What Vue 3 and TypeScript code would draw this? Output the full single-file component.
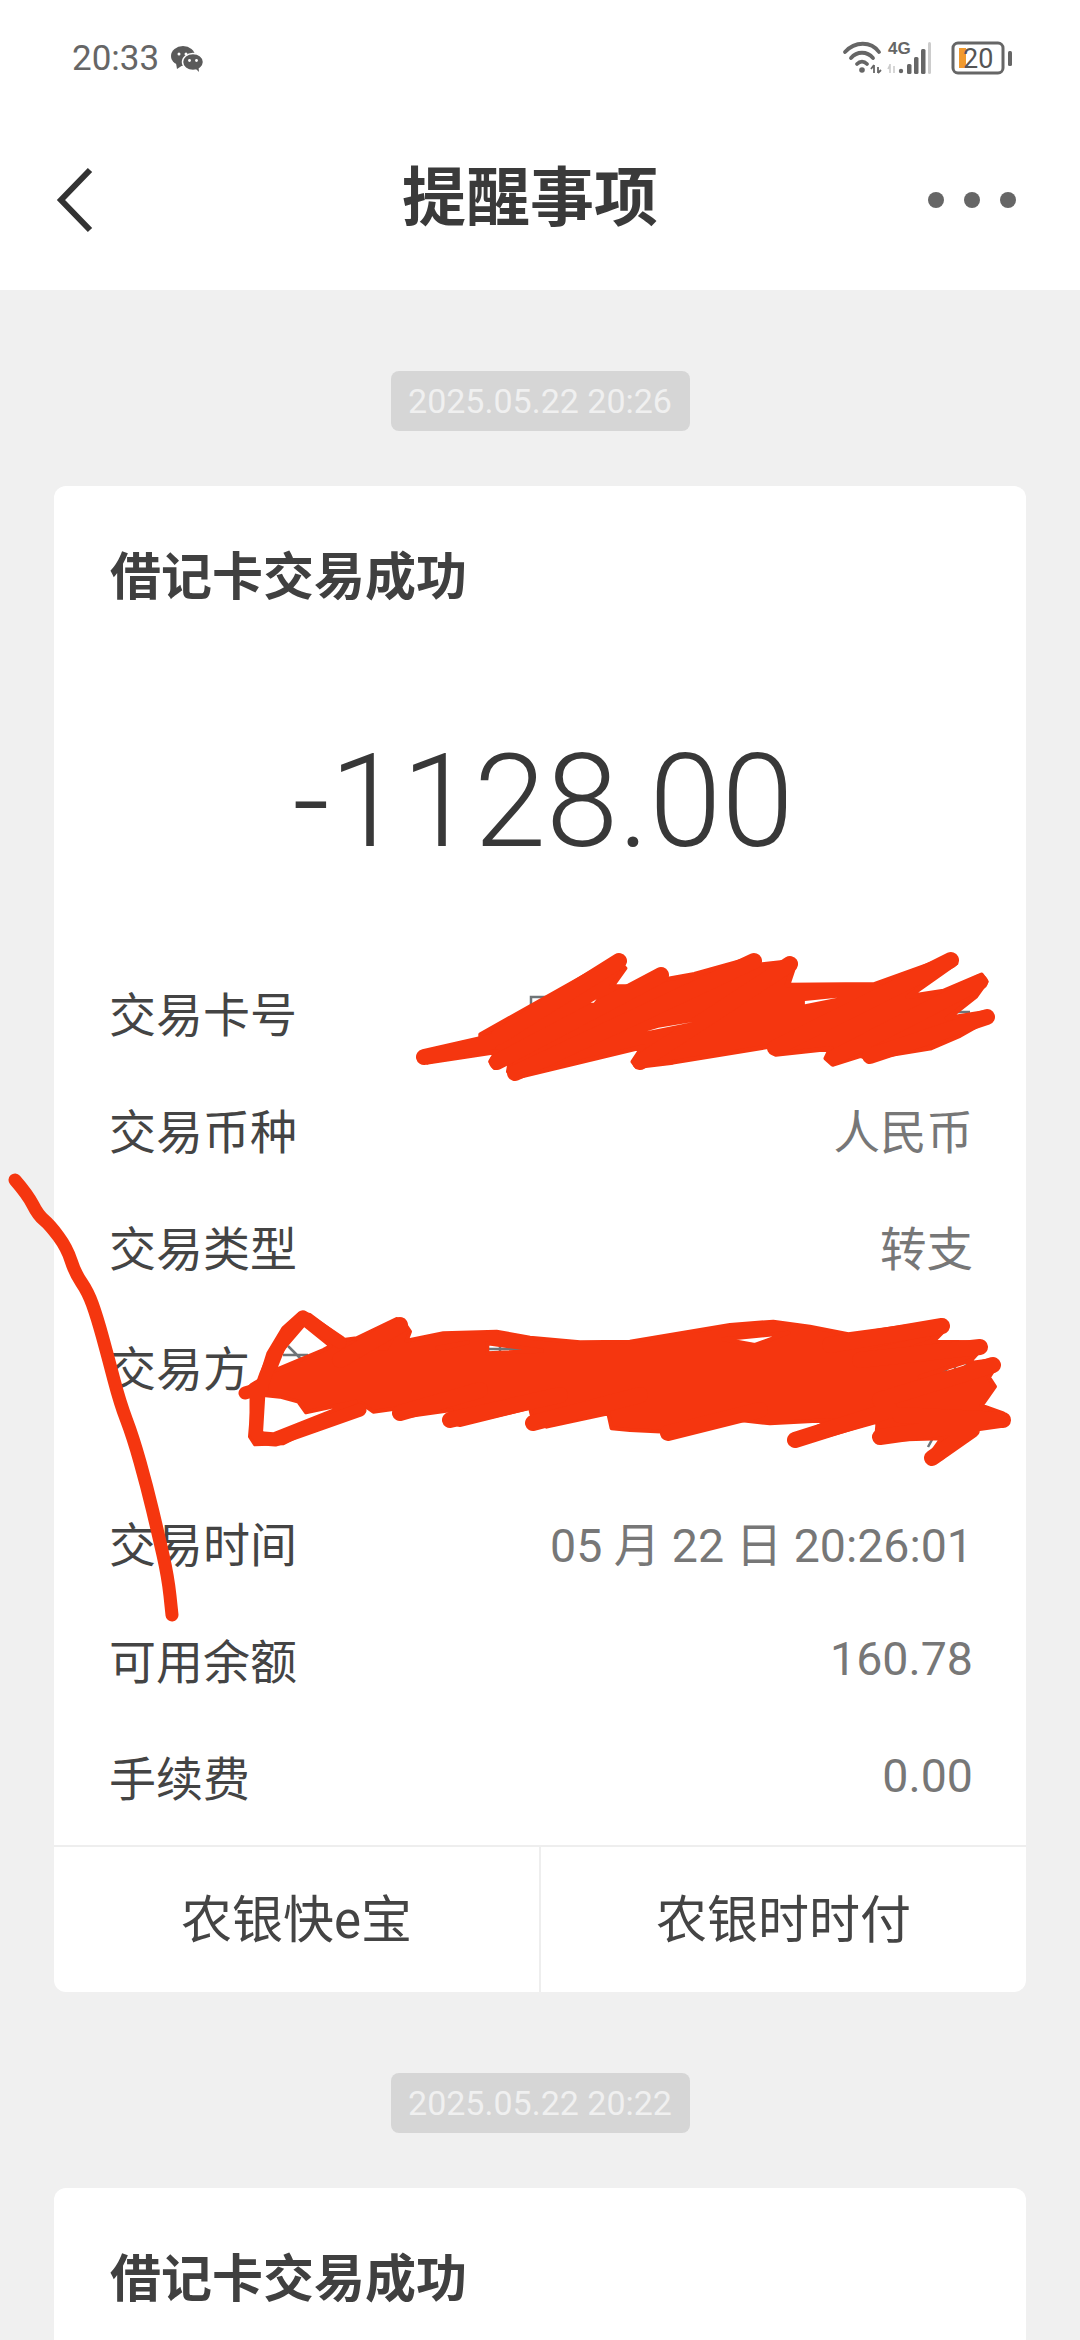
<script setup lang="ts">
interface Row {
  label: string;
  value: string;
  tall?: boolean;
}

interface Notice {
  time: string;
  title: string;
  amount?: string;
  rows?: Row[];
  actions?: string[];
}

const notices: Notice[] = [
  {
    time: '2025.05.22 20:26',
    title: '借记卡交易成功',
    amount: '-1128.00',
    rows: [
      { label: '交易卡号', value: '' },
      { label: '交易币种', value: '人民币' },
      { label: '交易类型', value: '转支' },
      { label: '交易方', value: '', tall: true },
      { label: '交易时间', value: '05 月 22 日 20:26:01' },
      { label: '可用余额', value: '160.78' },
      { label: '手续费', value: '0.00' },
    ],
    actions: ['农银快e宝', '农银时时付'],
  },
  {
    time: '2025.05.22 20:22',
    title: '借记卡交易成功',
  },
];

// pen stroke down the left edge, rounded through the midpoints
const penPoints: [number, number][] = [
  [15, 1180], [28, 1195], [38, 1215], [50, 1225], [67, 1248], [75, 1273], [88, 1292],
  [97, 1317], [108, 1357], [120, 1403], [133, 1437], [147, 1487], [158, 1533], [168, 1577], [172, 1615],
];

const penPath = penPoints.reduce((d, [x, y], i) => {
  if (i === 0) return `M${x} ${y}`;
  const next = penPoints[i + 1];
  if (!next) return `${d} L${x} ${y}`;
  return `${d} Q${x} ${y} ${(x + next[0]) / 2} ${(y + next[1]) / 2}`;
}, '');
</script>

<template>
  <div class="screen">
    <header class="top">
      <div class="status">
        <div class="status-left">
          <span class="clock">20:33</span>
          <svg class="wechat" width="34" height="26" viewBox="0 0 34 26">
            <ellipse cx="13" cy="10" rx="12" ry="10" fill="#5a5a5a" />
            <path d="M6 17l1 6 6-4z" fill="#5a5a5a" />
            <circle cx="9" cy="8" r="1.5" fill="#fff" />
            <circle cx="16" cy="8" r="1.5" fill="#fff" />
            <ellipse cx="23" cy="16" rx="10.5" ry="8.5" fill="#5a5a5a" stroke="#fff" stroke-width="1.5" />
            <path d="M26 23l3 3-.5-5z" fill="#5a5a5a" />
            <circle cx="19.5" cy="14.5" r="1.4" fill="#fff" />
            <circle cx="26.5" cy="14.5" r="1.4" fill="#fff" />
          </svg>
        </div>
        <svg class="status-icons" width="172" height="36" viewBox="0 0 172 36" fill="none">
          <g stroke="#666" stroke-linecap="round">
            <path d="M4 12C14 1 30 1 38 12" stroke-width="3.8" />
            <path d="M10 18C16 11 26 11 32 18" stroke-width="3.8" />
            <path d="M16 24C19 21 23 21 26 24" stroke-width="3.8" />
          </g>
          <circle cx="21" cy="30" r="2.8" fill="#666" />
          <path d="M33 25v8M37 27v6M30 29l3-4M40 30l-3 3" stroke="#666" stroke-width="1.8" />
          <text x="47" y="14" class="net">4G</text>
          <path d="M49 24v9M53 26v7M47 29l2-4" stroke="#ccc" stroke-width="1.6" />
          <g fill="#666">
            <circle cx="60" cy="31" r="2.2" />
            <rect x="66" y="24" width="4.5" height="10" rx="1.5" />
            <rect x="73" y="17" width="4.5" height="17" rx="1.5" />
            <rect x="80" y="9" width="4.5" height="25" rx="1.5" />
          </g>
          <rect x="87" y="2" width="3" height="32" rx="1.5" fill="#ccc" />
          <rect x="112" y="3" width="50" height="30" rx="5" stroke="#666" stroke-width="3" />
          <rect x="118" y="8" width="7" height="20" fill="#f19a2e" />
          <text x="122" y="28" class="level">20</text>
          <rect x="167" y="11" width="4" height="15" rx="1.5" fill="#666" />
        </svg>
      </div>
      <nav class="nav">
        <svg class="back" width="40" height="66" viewBox="0 0 40 66" fill="none">
          <path d="M36 3L7 33l29 30" stroke="#333" stroke-width="6" />
        </svg>
        <h1 class="nav-title">提醒事项</h1>
        <div class="more">
          <i></i>
          <i></i>
          <i></i>
        </div>
      </nav>
    </header>

    <main class="list">
      <section v-for="notice in notices" :key="notice.time" class="notice">
        <div class="stamp">{{ notice.time }}</div>
        <article class="card">
          <h2 class="card-title">{{ notice.title }}</h2>
          <template v-if="notice.rows">
            <div class="amount">{{ notice.amount }}</div>
            <div class="rows">
              <div
                v-for="row in notice.rows"
                :key="row.label"
                class="row"
                :class="{ tall: row.tall }"
              >
                <span class="label">{{ row.label }}</span>
                <span class="value">{{ row.value }}</span>
              </div>
            </div>
            <div class="actions">
              <button v-for="action in notice.actions" :key="action" class="action">{{ action }}</button>
            </div>
          </template>
        </article>
      </section>
    </main>

    <!-- hand drawn redaction marks over the screenshot -->
    <svg class="marks" width="1080" height="2340" viewBox="0 0 1080 2340" fill="none">
      <g stroke="#6f7477" stroke-width="2.5">
        <path d="M531 1008V997H552M914 998H930M950 1020V1012H970" />
        <path d="M283 1355H308M288 1346l14 14M488 1349h50M500 1345v12" />
        <path d="M930 1372l8-8 6 8 8-8 6 8 10-8M966 1362h6M928 1447l6-11" />
      </g>
      <!-- card number scribble -->
      <g transform="translate(400 940) scale(0.3954 0.3333)">
        <path
          fill="#f5360f"
          stroke="#f5360f"
          stroke-width="14"
          stroke-linejoin="round"
          d="M50 358L205 303 205 283 540 60 568 85 535 140 580 140 660 100 675 118 745 103 890 55 905 75 985 65 995 82 980 135 1200 133 1395 50 1405 70 1285 170 1375 153 1470 105 1482 125 1455 170 1385 235 1480 217 1492 235 1415 287 1340 325 1185 355 1165 347 1095 373 1078 355 1090 325 950 343 940 318 690 367 600 380 590 365 615 320 300 410 275 395 280 360 240 383 230 365 245 335 70 367Z"
        />
      </g>
      <path
        class="scrawl"
        d="M424 1057L490 1042M498 1037L619 961M497 1062L661 975M515 1073L754 961M640 1062L790 964M775 1048L951 960M835 1057L980 982M870 1056L987 1017"
      />
      <g transform="translate(400 940) scale(0.3954 0.3333)">
        <path d="M1024 183L1106 173 1024 193ZM624 274L741 246 654 263ZM482 188L497 178 490 188Z" fill="#fff" />
      </g>
      <!-- counterparty scribble -->
      <g transform="translate(230 1290) scale(0.3333)">
        <path
          fill="#f5360f"
          fill-rule="evenodd"
          stroke="#f5360f"
          stroke-width="12"
          stroke-linejoin="round"
          d="M40 310L65 285 90 270 115 190 160 115 210 70 240 75 340 150 380 145 500 87 520 95 540 125 530 152 640 130 800 125 900 143 1050 157 1200 155 1500 105 1630 95 1740 110 1855 133 2135 95 2152 112 2110 155 2245 157 2256 175 2215 220 2290 210 2300 225 2277 262 2295 290 2255 347 2320 370 2326 395 2310 407 2230 405 2225 432 2135 505 2105 515 2100 495 2135 445 1955 450 1940 430 1943 395 1710 460 1690 445 1805 390 1620 400 1530 390 1330 440 1308 425 1200 420 1145 415 1135 370 950 410 910 395 900 353 690 405 655 395 665 360 520 380 505 355 430 365 395 340 160 460 75 463 60 440 70 320Z
          M100 315L150 320 205 335 228 367 378 335 130 433 93 430Z
          M222 103L302 168 280 180 133 242 160 175Z
          M622 173L714 157 636 176Z
          M772 160L936 182 772 190Z
          M450 175L484 150 470 175Z
          M1480 148L1676 128 1575 165Z
          M1920 183L2096 143 2004 175Z
          M2070 260L2226 210 2205 240 2075 261Z"
        />
      </g>
      <path
        class="scrawl"
        d="M830 1345L942 1326M860 1360L980 1347M880 1400L993 1365M900 1415L1003 1420M932 1458L972 1430M795 1440L890 1410M880 1437L1000 1420M668 1433L760 1410M533 1423L640 1395M450 1420L560 1395M400 1413L480 1390M400 1325L340 1360"
      />
      <path
        d="M340 1342L303 1317Q275 1345 262 1385M245 1393L262 1388M256 1400L256 1432Q258 1440 275 1440L360 1410"
        stroke="#f5360f"
        stroke-width="13"
        stroke-linecap="round"
        stroke-linejoin="round"
      />
      <path :d="penPath" stroke="#f5360f" stroke-width="13" stroke-linecap="round" stroke-linejoin="round" />
    </svg>
  </div>
</template>

<style>
html,
body {
  margin: 0;
  background: #f0f0f0;
}
</style>

<style scoped>
.screen {
  position: relative;
  width: 1080px;
  height: 2340px;
  overflow: hidden;
  background: #f0f0f0;
  font-family: Roboto, "Noto Sans CJK SC", sans-serif;
}

.top {
  height: 290px;
  background: #fff;
}

.status {
  height: 110px;
  padding: 6px 67px 0 72px;
  display: flex;
  align-items: center;
  justify-content: space-between;
  box-sizing: border-box;
}

.status-left {
  display: flex;
  align-items: center;
  gap: 11px;
}

.clock {
  font-size: 35px;
  color: #666;
}

.wechat {
  margin-top: 2px;
}

.net {
  font-family: "Liberation Sans", sans-serif;
  font-size: 17px;
  font-weight: 700;
  fill: #666;
}

.level {
  font-size: 27px;
  fill: #555;
}

.nav {
  height: 180px;
  padding: 0 64px 0 54px;
  display: flex;
  align-items: center;
  justify-content: space-between;
  position: relative;
}

.nav-title {
  position: absolute;
  left: 0;
  right: 20px;
  top: 52px;
  margin: 0;
  text-align: center;
  font-size: 64px;
  line-height: 74px;
  font-weight: 700;
  color: #3a3a3a;
}

.more {
  display: flex;
  gap: 20px;
}

.more i {
  width: 16px;
  height: 16px;
  border-radius: 50%;
  background: #666;
}

.list {
  display: flex;
  flex-direction: column;
}

.notice {
  display: flex;
  flex-direction: column;
  align-items: center;
}

.stamp {
  width: 299px;
  height: 60px;
  margin-top: 81px;
  line-height: 60px;
  text-align: center;
  font-size: 34px;
  color: #f0f0f0;
  background: #d6d6d6;
  border-radius: 8px;
}

.card {
  width: 972px;
  margin-top: 55px;
  background: #fff;
  border-radius: 12px;
}

.card-title {
  height: 182px;
  margin: 0;
  padding: 2px 0 0 56px;
  box-sizing: border-box;
  line-height: 180px;
  font-size: 51px;
  font-weight: 700;
  color: #404040;
}

.amount {
  height: 267px;
  margin-bottom: 22px;
  padding-left: 6px;
  box-sizing: border-box;
  line-height: 267px;
  text-align: center;
  font-size: 130px;
  font-weight: 300;
  color: #383838;
}

.rows {
  padding: 0 53px 7px 55px;
}

.row {
  height: 117px;
  padding-bottom: 8px;
  box-sizing: border-box;
  display: flex;
  align-items: center;
  justify-content: space-between;
  font-size: 47px;
}

.row.tall {
  height: 179px;
  padding: 23px 0 0;
  align-items: flex-start;
}

.label {
  color: #444;
}

.value {
  font-size: 46.5px;
  color: #777;
}

.actions {
  height: 147px;
  display: flex;
  border-top: 2px solid #eee;
  box-sizing: border-box;
}

.action {
  flex: 1;
  border: 0;
  padding: 0 0 8px;
  background: none;
  font-family: inherit;
  font-size: 51px;
  color: #444;
}

.action + .action {
  border-left: 2px solid #eee;
}

.marks {
  position: absolute;
  top: 0;
  left: 0;
  pointer-events: none;
}

.scrawl {
  stroke: #f5360f;
  stroke-width: 16px;
  stroke-linecap: round;
}
</style>
